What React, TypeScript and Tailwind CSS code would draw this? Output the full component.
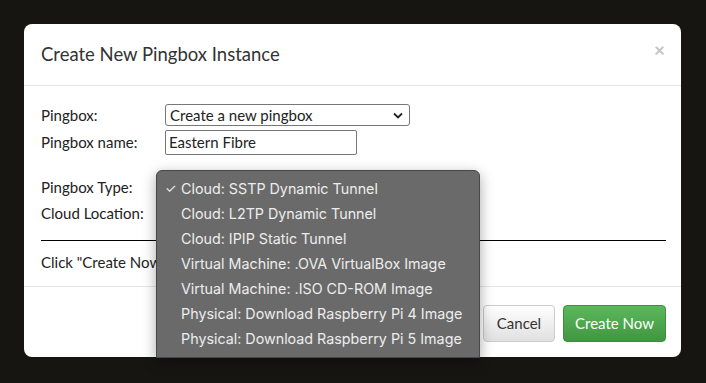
const options = [
  "Cloud: SSTP Dynamic Tunnel",
  "Cloud: L2TP Dynamic Tunnel",
  "Cloud: IPIP Static Tunnel",
  "Virtual Machine: .OVA VirtualBox Image",
  "Virtual Machine: .ISO CD-ROM Image",
  "Physical: Download Raspberry Pi 4 Image",
  "Physical: Download Raspberry Pi 5 Image",
  "Physical: Order a Hardware Pingbox Unit",
];

function Row({ label, children }: { label: string; children?: React.ReactNode }) {
  return (
    <div className="flex items-center">
      <div className="w-[124px] shrink-0">{label}</div>
      {children}
    </div>
  );
}

function OptionList() {
  return (
    <div className="absolute left-[156px] top-[170px] h-[188px] w-[324px] overflow-hidden rounded-t-[6px] border border-[#474747] bg-[#6a6a6a] pt-[5px] shadow-[0_4px_14px_rgba(0,0,0,0.35)] [font-family:Inter,'Liberation_Sans',sans-serif]">
      {options.map((o, i) => (
        <div key={o} className="flex h-[25px] items-center text-[14.3px] text-[#ededed]">
          <span className="w-[24px] pl-[8px] text-[13px]">{i === 0 ? "✓" : ""}</span>
          <span>{o}</span>
        </div>
      ))}
    </div>
  );
}

export default function App() {
  return (
    <div className="relative h-[383px] w-[706px] overflow-hidden bg-[#171512] pl-[24px] pt-[24px] text-[#222] [font-family:Lato,'Open_Sans',sans-serif]">
      <div className="flex h-[333px] w-[657px] flex-col rounded-[8px] bg-white">
        <div className="flex h-[62px] items-center justify-between border-b border-[#e5e5e5] pl-[17px] pr-[16px]">
          <h2 className="text-[18.5px] text-[#333]">Create New Pingbox Instance</h2>
          <span className="-mt-[10px] text-[19px] font-bold leading-none text-[#c2c2c2]">×</span>
        </div>

        <div className="flex-1 border-b border-[#e5e5e5] pl-[17px] pr-[15px] pt-[18px] text-[15px] text-[#222]">
          <Row label="Pingbox:">
            <div className="flex h-[22px] w-[245px] items-center justify-between rounded-[3px] border border-[#777] px-[4px]">
              <span>Create a new pingbox</span>
              <svg width="10" height="7" viewBox="0 0 10 7" className="mr-[2px]">
                <path d="M1 1.5l4 4 4-4" fill="none" stroke="#222" strokeWidth="1.8" />
              </svg>
            </div>
          </Row>
          <div className="mt-[3px]">
            <Row label="Pingbox name:">
              <div className="flex h-[25px] w-[192px] items-center rounded-[2px] border border-[#777] px-[3px]">
                Eastern Fibre
              </div>
            </Row>
          </div>
          <div className="mt-[21px] flex flex-col gap-[4px]">
            <Row label="Pingbox Type:">
              <div className="h-[21px] w-[245px]" />
            </Row>
            <Row label="Cloud Location:">
              <div className="h-[21px] w-[245px]" />
            </Row>
          </div>
          <div className="mt-[15px] border-t border-black" />
          <p className="mt-[10px]">Click "Create Now" to set up.</p>
        </div>

        <div className="flex h-[70px] items-start justify-end gap-[8px] pr-[15px] pt-[18px] text-[15px]">
          <button className="h-[37px] w-[72px] rounded-[4px] border border-[#ccc] bg-gradient-to-b from-white to-[#e0e0e0] text-[#333]">
            Cancel
          </button>
          <button className="h-[37px] w-[103px] rounded-[4px] border border-[#3e8f3e] bg-gradient-to-b from-[#5cb85c] to-[#419641] text-white">
            Create Now
          </button>
        </div>
      </div>
      <OptionList />
    </div>
  );
}
